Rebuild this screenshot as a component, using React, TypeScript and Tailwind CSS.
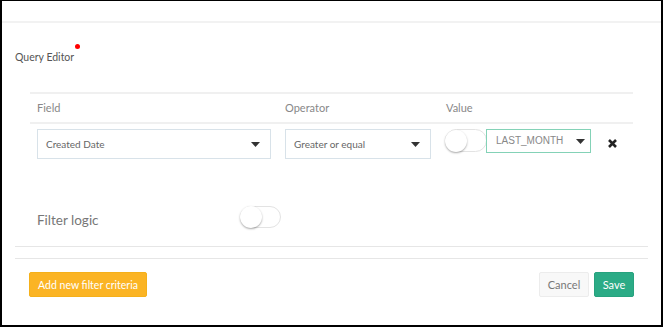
import React from "react";

const Caret = () => (
  <svg width="9" height="5" viewBox="0 0 9 5" className="shrink-0">
    <polygon points="0,0 9,0 4.5,5" fill="#333" />
  </svg>
);

const Toggle = ({ className = "" }: { className?: string }) => (
  <div
    className={`flex items-center rounded-full border border-[#e3e3e3] bg-white ${className}`}
  >
    <div className="-ml-px h-[22px] w-[22px] rounded-full bg-white shadow-[0_1px_2px_rgba(0,0,0,0.35)]" />
  </div>
);

const Select = ({ label, width }: { label: string; width: string }) => (
  <div
    className={`flex h-[30px] items-center justify-between border border-[#d8e2e9] bg-white pl-[8px] pr-[10px] ${width}`}
  >
    <span className="text-[10px] text-[#666]">{label}</span>
    <Caret />
  </div>
);

export default function App() {
  return (
    <div className="h-[327px] w-[663px] overflow-hidden border-2 border-t border-black bg-white font-['Lato',sans-serif] leading-[16px]">
      {/* modal header */}
      <div className="h-[22px] border-b-2 border-[#f2f2f2]" />

      <div className="px-[13px] pt-[26px]">
        <div className="flex h-[16px]">
          <div className="relative text-[10.5px] leading-[16px] text-[#555]">
            Query Editor
            <span className="absolute -right-[6px] -top-[5px] h-[5px] w-[5px] rounded-full bg-[#ff0000]" />
          </div>
        </div>

        {/* criteria table */}
        <div className="ml-[15px] mr-[15px] mt-[27px]">
          <div className="grid h-[32px] grid-cols-[248px_160px_1fr] items-center border-y-2 border-[#f0f0f0] pl-[7px] text-[11px] text-[#888]">
            <span>Field</span>
            <span>Operator</span>
            <span className="pl-px">Value</span>
          </div>
          <div className="grid grid-cols-[248px_160px_1fr] items-start pl-[7px] pt-[5px]">
            <Select label="Created Date" width="w-[234px]" />
            <Select label="Greater or equal" width="w-[146px]" />
            <div className="flex items-start">
              <Toggle className="h-[23px] w-[42px]" />
              <div className="-ml-px flex h-[24px] w-[105px] items-center justify-between border border-[#84d2b7] pl-[9px] pr-[5px]">
                <span className="font-['Liberation_Sans',Arial,sans-serif] text-[10px] text-[#888]">
                  LAST_MONTH
                </span>
                <Caret />
              </div>
              <svg width="9" height="9" viewBox="0 0 9 9" className="ml-[17px] mt-[10px]">
                <path d="M1 1 L8 8 M8 1 L1 8" stroke="#222" strokeWidth="2.6" />
              </svg>
            </div>
          </div>
        </div>

        {/* filter logic */}
        <div className="mt-[47px] flex h-[22px] items-center pl-[22px]">
          <span className="mt-[6px] w-[203px] text-[13.5px] text-[#777]">Filter logic</span>
          <Toggle className="h-[22px] w-[41px]" />
        </div>
        <div className="mt-[18px] h-[12px] border-t border-[#e6e6e6]" />

        {/* footer */}
        <div className="flex items-center justify-between border-t border-[#e6e6e6] px-[14px] pt-[13px]">
          <button className="h-[25px] w-[118px] rounded-[2px] border border-[#f5b01a] bg-[#fbb424] text-[10.5px] text-white">
            Add new filter criteria
          </button>
          <div className="flex gap-[5px]">
            <button className="h-[25px] w-[50px] rounded-[2px] border border-[#ececec] bg-[#f8f8f8] text-[11px] text-[#777]">
              Cancel
            </button>
            <button className="h-[25px] w-[40px] rounded-[2px] border border-[#27a27e] bg-[#2bab86] text-[11px] text-white">
              Save
            </button>
          </div>
        </div>
      </div>
    </div>
  );
}
